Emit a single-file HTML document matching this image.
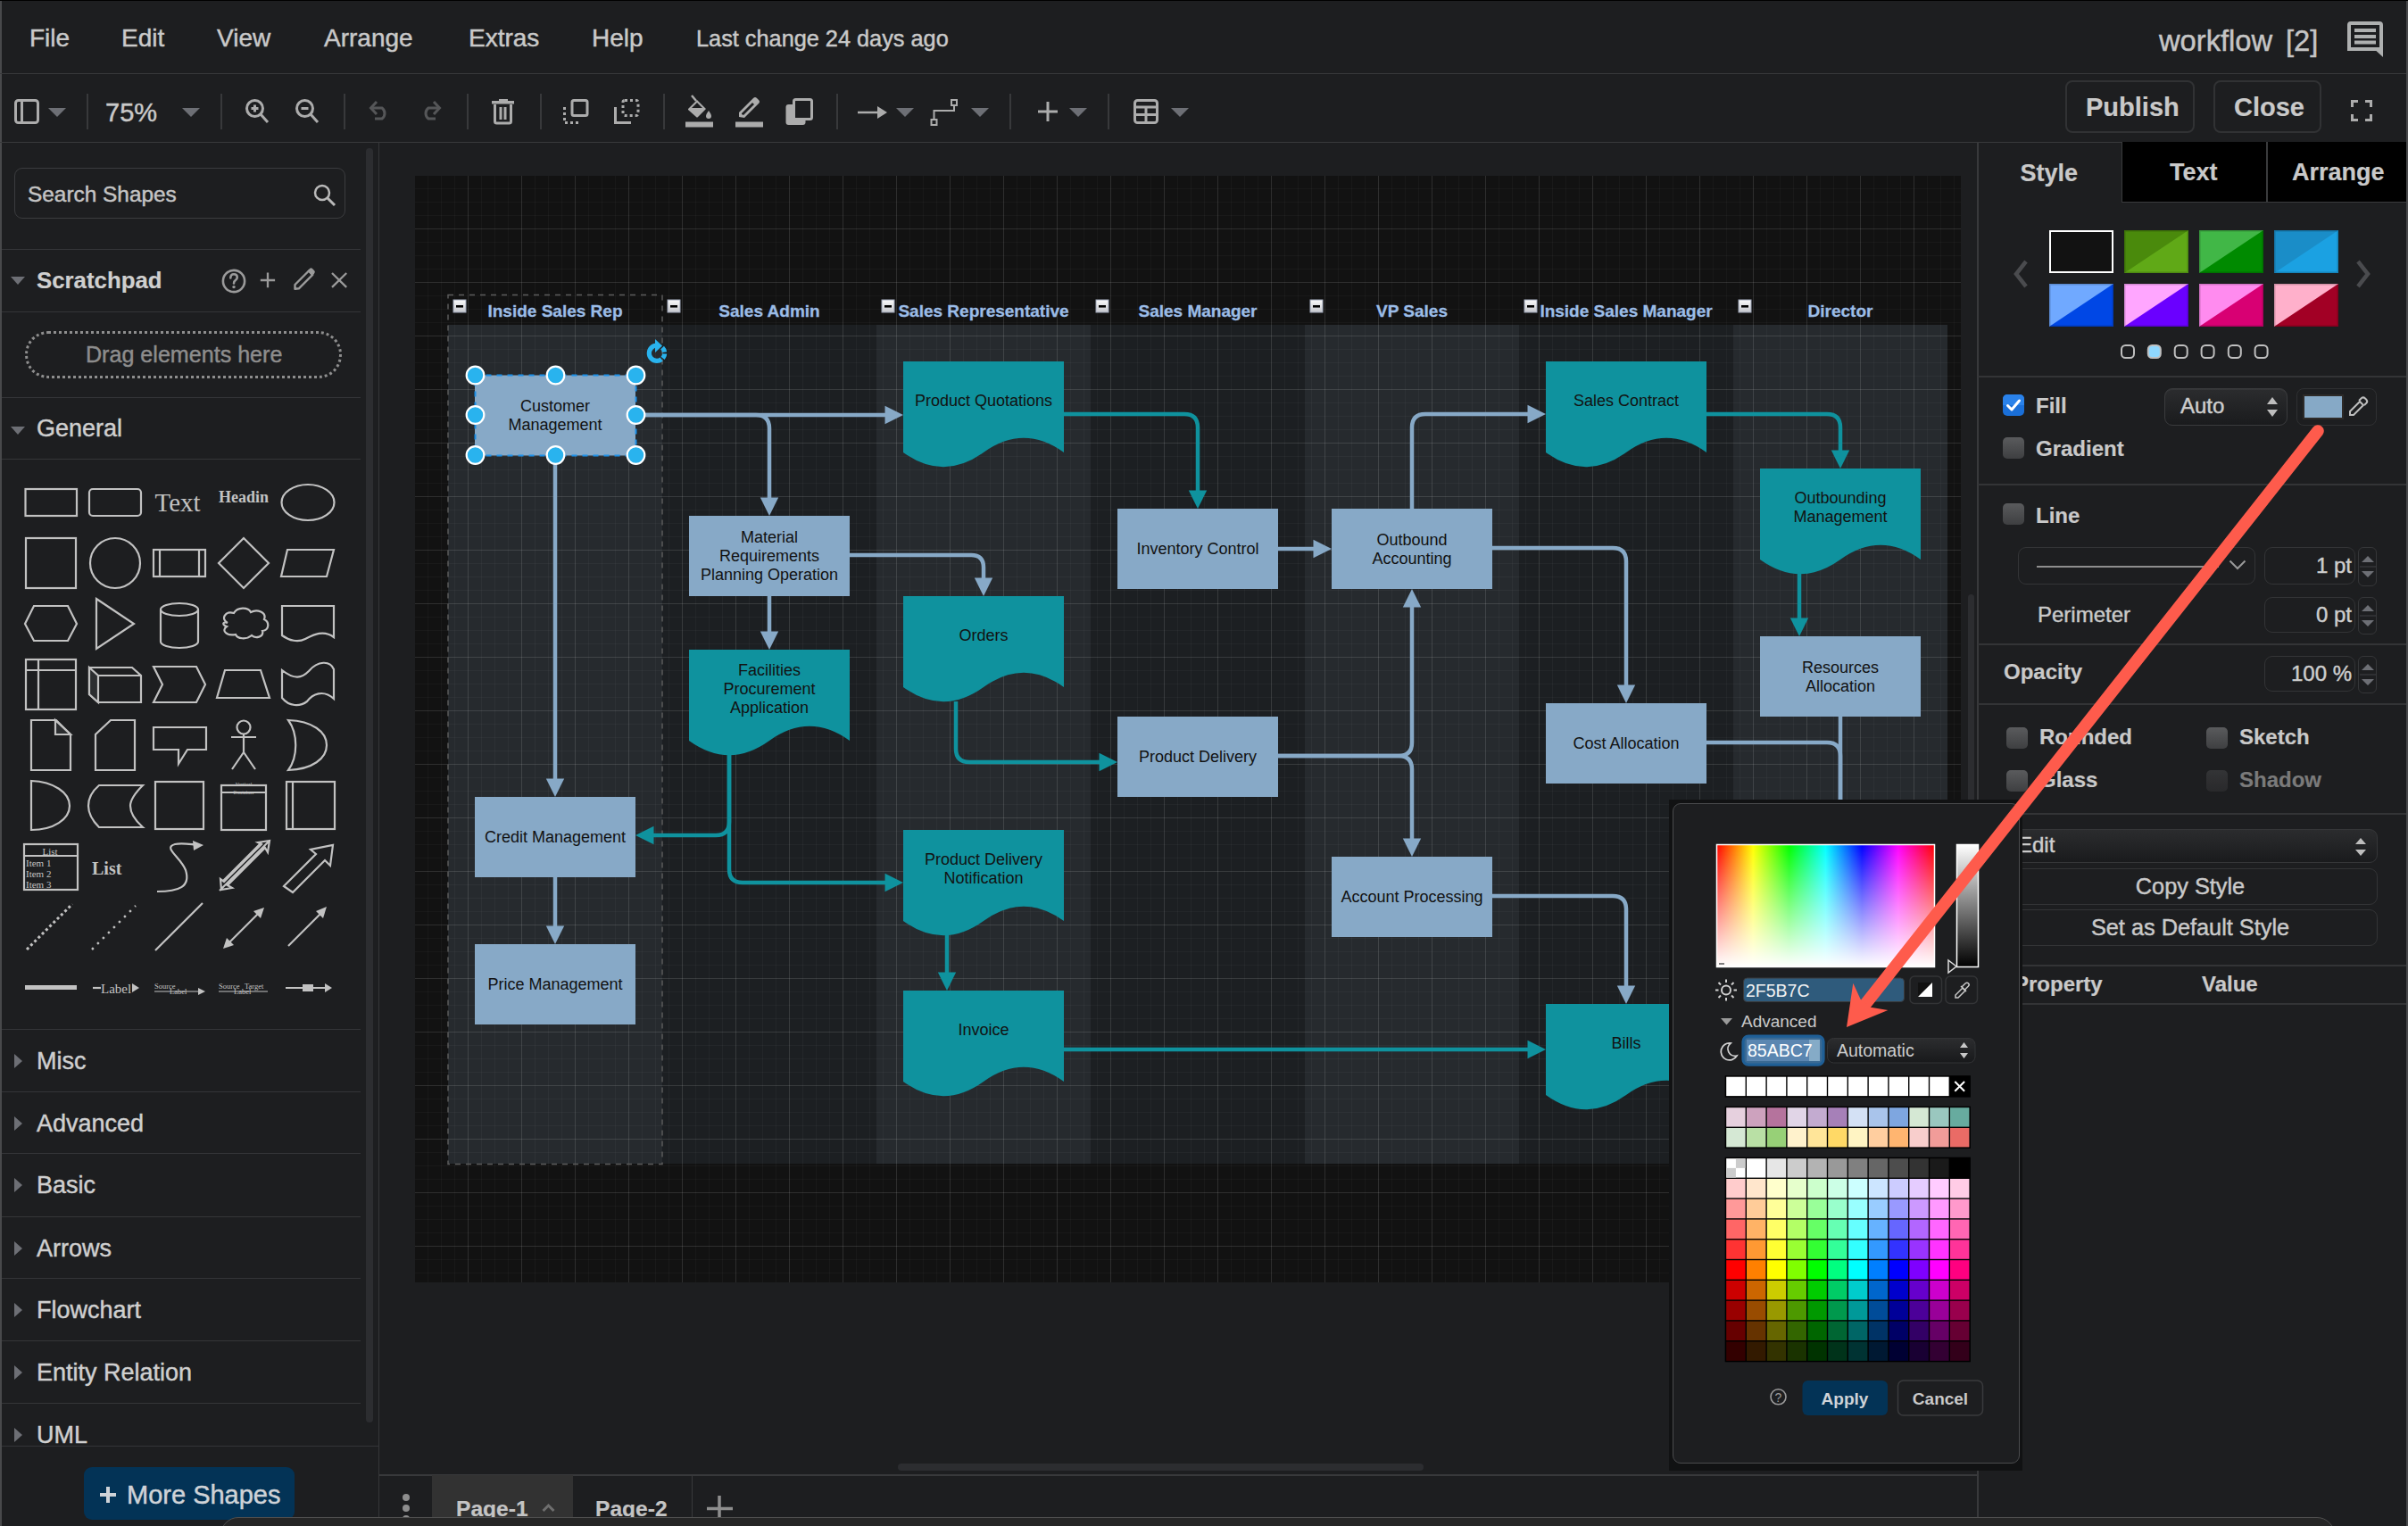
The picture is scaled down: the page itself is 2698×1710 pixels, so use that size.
<!DOCTYPE html>
<html><head><meta charset="utf-8"><title>draw.io</title>
<style>
html,body{margin:0;padding:0;}
body{width:2698px;height:1710px;overflow:hidden;position:relative;background:#1d1e20;font-family:"Liberation Sans", sans-serif;color:#c8c8c8;}
.a{position:absolute;}
.t{position:absolute;white-space:nowrap;line-height:1;-webkit-text-stroke:0.45px currentColor;}
.t.b{-webkit-text-stroke:0.2px currentColor;}
.hl{position:absolute;height:1px;background:#353638;}
.vl{position:absolute;width:1px;background:#353638;}
svg{position:absolute;overflow:visible;}
</style></head><body>

<div class="a" style="left:465px;top:197px;width:1732px;height:1240px;background:#121212"></div>
<svg style="left:0;top:0" width="2698" height="1710"><rect x="502" y="364" width="240" height="940" fill="#262a2e"/><rect x="742" y="364" width="240" height="940" fill="#1c1f22"/><rect x="982" y="364" width="240" height="940" fill="#262a2e"/><rect x="1222" y="364" width="240" height="940" fill="#1c1f22"/><rect x="1462" y="364" width="240" height="940" fill="#262a2e"/><rect x="1702" y="364" width="240" height="940" fill="#1c1f22"/><rect x="1942" y="364" width="240" height="940" fill="#262a2e"/></svg>
<div class="a" style="left:465px;top:197px;width:1732px;height:1240px;background-image:linear-gradient(to right, rgba(255,255,255,.09) 1px, transparent 1px),linear-gradient(to bottom, rgba(255,255,255,.09) 1px, transparent 1px),linear-gradient(to right, rgba(255,255,255,.03) 1px, transparent 1px),linear-gradient(to bottom, rgba(255,255,255,.03) 1px, transparent 1px);background-size:60px 60px,60px 60px,15px 15px,15px 15px;background-position:-1px -1px"></div>
<svg style="left:0;top:0" width="2698" height="1710"><g font-family="Liberation Sans, sans-serif"><rect x="502" y="330.5" width="240" height="974" fill="none" stroke="#5b5b5b" stroke-width="1.5" stroke-dasharray="6 6"/><text x="622" y="354.5" font-size="19" font-weight="bold" text-anchor="middle" fill="#9bbce6" stroke="#9bbce6" stroke-width="0.3">Inside Sales Rep</text><text x="862" y="354.5" font-size="19" font-weight="bold" text-anchor="middle" fill="#9bbce6" stroke="#9bbce6" stroke-width="0.3">Sales Admin</text><text x="1102" y="354.5" font-size="19" font-weight="bold" text-anchor="middle" fill="#9bbce6" stroke="#9bbce6" stroke-width="0.3">Sales Representative</text><text x="1342" y="354.5" font-size="19" font-weight="bold" text-anchor="middle" fill="#9bbce6" stroke="#9bbce6" stroke-width="0.3">Sales Manager</text><text x="1582" y="354.5" font-size="19" font-weight="bold" text-anchor="middle" fill="#9bbce6" stroke="#9bbce6" stroke-width="0.3">VP Sales</text><text x="1822" y="354.5" font-size="19" font-weight="bold" text-anchor="middle" fill="#9bbce6" stroke="#9bbce6" stroke-width="0.3">Inside Sales Manager</text><text x="2062" y="354.5" font-size="19" font-weight="bold" text-anchor="middle" fill="#9bbce6" stroke="#9bbce6" stroke-width="0.3">Director</text><defs><linearGradient id="cg" x1="0" y1="0" x2="0" y2="1"><stop offset="0" stop-color="#fbfbfb"/><stop offset="1" stop-color="#c4c6cc"/></linearGradient></defs><rect x="508" y="336" width="14" height="14" fill="url(#cg)" stroke="#9ea6b8" stroke-width="1"/><rect x="511" y="342" width="8" height="2.6" fill="#000"/><rect x="748" y="336" width="14" height="14" fill="url(#cg)" stroke="#9ea6b8" stroke-width="1"/><rect x="751" y="342" width="8" height="2.6" fill="#000"/><rect x="988" y="336" width="14" height="14" fill="url(#cg)" stroke="#9ea6b8" stroke-width="1"/><rect x="991" y="342" width="8" height="2.6" fill="#000"/><rect x="1228" y="336" width="14" height="14" fill="url(#cg)" stroke="#9ea6b8" stroke-width="1"/><rect x="1231" y="342" width="8" height="2.6" fill="#000"/><rect x="1468" y="336" width="14" height="14" fill="url(#cg)" stroke="#9ea6b8" stroke-width="1"/><rect x="1471" y="342" width="8" height="2.6" fill="#000"/><rect x="1708" y="336" width="14" height="14" fill="url(#cg)" stroke="#9ea6b8" stroke-width="1"/><rect x="1711" y="342" width="8" height="2.6" fill="#000"/><rect x="1948" y="336" width="14" height="14" fill="url(#cg)" stroke="#9ea6b8" stroke-width="1"/><rect x="1951" y="342" width="8" height="2.6" fill="#000"/><path d="M712.0 465.0 L993.5 465.0" fill="none" stroke="#87a9c7" stroke-width="4.5"/><path d="M1012.0 465.0 L991.5 475.2 L991.5 454.8 Z" fill="#87a9c7"/><path d="M712.0 465.0 L847.0 465.0 Q862.0 465.0 862.0 480.0 L862.0 559.5" fill="none" stroke="#87a9c7" stroke-width="4.5"/><path d="M862.0 578.0 L851.8 557.5 L872.2 557.5 Z" fill="#87a9c7"/><path d="M622.0 510.0 L622.0 874.5" fill="none" stroke="#87a9c7" stroke-width="4.5"/><path d="M622.0 893.0 L611.8 872.5 L632.2 872.5 Z" fill="#87a9c7"/><path d="M622.0 983.0 L622.0 1039.5" fill="none" stroke="#87a9c7" stroke-width="4.5"/><path d="M622.0 1058.0 L611.8 1037.5 L632.2 1037.5 Z" fill="#87a9c7"/><path d="M862.0 668.0 L862.0 709.5" fill="none" stroke="#87a9c7" stroke-width="4.5"/><path d="M862.0 728.0 L851.8 707.5 L872.2 707.5 Z" fill="#87a9c7"/><path d="M952.0 622.0 L1088.2 622.0 Q1102.0 622.0 1102.0 635.8 L1102.0 649.5" fill="none" stroke="#87a9c7" stroke-width="4.5"/><path d="M1102.0 668.0 L1091.8 647.5 L1112.2 647.5 Z" fill="#87a9c7"/><path d="M1432.0 615.0 L1473.5 615.0" fill="none" stroke="#87a9c7" stroke-width="4.5"/><path d="M1492.0 615.0 L1471.5 625.2 L1471.5 604.8 Z" fill="#87a9c7"/><path d="M1582.0 570.0 L1582.0 479.0 Q1582.0 464.0 1597.0 464.0 L1713.5 464.0" fill="none" stroke="#87a9c7" stroke-width="4.5"/><path d="M1732.0 464.0 L1711.5 474.2 L1711.5 453.8 Z" fill="#87a9c7"/><path d="M1672.0 614.0 L1807.0 614.0 Q1822.0 614.0 1822.0 629.0 L1822.0 769.5" fill="none" stroke="#87a9c7" stroke-width="4.5"/><path d="M1822.0 788.0 L1811.8 767.5 L1832.2 767.5 Z" fill="#87a9c7"/><path d="M1432.0 847.0 L1567.0 847.0 Q1582.0 847.0 1582.0 832.0 L1582.0 678.5" fill="none" stroke="#87a9c7" stroke-width="4.5"/><path d="M1582.0 660.0 L1592.2 680.5 L1571.8 680.5 Z" fill="#87a9c7"/><path d="M1432.0 847.0 L1567.0 847.0 Q1582.0 847.0 1582.0 862.0 L1582.0 941.5" fill="none" stroke="#87a9c7" stroke-width="4.5"/><path d="M1582.0 960.0 L1571.8 939.5 L1592.2 939.5 Z" fill="#87a9c7"/><path d="M1672.0 1004.0 L1807.0 1004.0 Q1822.0 1004.0 1822.0 1019.0 L1822.0 1106.5" fill="none" stroke="#87a9c7" stroke-width="4.5"/><path d="M1822.0 1125.0 L1811.8 1104.5 L1832.2 1104.5 Z" fill="#87a9c7"/><path d="M1912.0 832.0 L2047.0 832.0 Q2062.0 832.0 2062.0 847.0 L2062.0 1000.0" fill="none" stroke="#87a9c7" stroke-width="4.5"/><path d="M2062.0 803.0 L2062.0 1000.0" fill="none" stroke="#87a9c7" stroke-width="4.5"/><path d="M1192.0 464.0 L1327.0 464.0 Q1342.0 464.0 1342.0 479.0 L1342.0 551.5" fill="none" stroke="#0f929e" stroke-width="4.5"/><path d="M1342.0 570.0 L1331.8 549.5 L1352.2 549.5 Z" fill="#0f929e"/><path d="M1071.0 786.0 L1071.0 839.0 Q1071.0 854.0 1086.0 854.0 L1233.5 854.0" fill="none" stroke="#0f929e" stroke-width="4.5"/><path d="M1252.0 854.0 L1231.5 864.2 L1231.5 843.8 Z" fill="#0f929e"/><path d="M817.0 846.0 L817.0 921.0 Q817.0 936.0 802.0 936.0 L730.5 936.0" fill="none" stroke="#0f929e" stroke-width="4.5"/><path d="M712.0 936.0 L732.5 925.8 L732.5 946.2 Z" fill="#0f929e"/><path d="M817.0 846.0 L817.0 974.0 Q817.0 989.0 832.0 989.0 L993.5 989.0" fill="none" stroke="#0f929e" stroke-width="4.5"/><path d="M1012.0 989.0 L991.5 999.2 L991.5 978.8 Z" fill="#0f929e"/><path d="M1061.0 1047.0 L1061.0 1091.5" fill="none" stroke="#0f929e" stroke-width="4.5"/><path d="M1061.0 1110.0 L1050.8 1089.5 L1071.2 1089.5 Z" fill="#0f929e"/><path d="M1192.0 1176.0 L1713.5 1176.0" fill="none" stroke="#0f929e" stroke-width="4.5"/><path d="M1732.0 1176.0 L1711.5 1186.2 L1711.5 1165.8 Z" fill="#0f929e"/><path d="M1912.0 464.0 L2047.0 464.0 Q2062.0 464.0 2062.0 479.0 L2062.0 506.5" fill="none" stroke="#0f929e" stroke-width="4.5"/><path d="M2062.0 525.0 L2051.8 504.5 L2072.2 504.5 Z" fill="#0f929e"/><path d="M2016.0 643.0 L2016.0 694.5" fill="none" stroke="#0f929e" stroke-width="4.5"/><path d="M2016.0 713.0 L2005.8 692.5 L2026.2 692.5 Z" fill="#0f929e"/><rect x="532" y="420.5" width="180" height="90" fill="#87a9c7"/><text x="622" y="460.9" font-size="18" text-anchor="middle" fill="#121212">Customer</text><text x="622" y="482.1" font-size="18" text-anchor="middle" fill="#121212">Management</text><rect x="772" y="578" width="180" height="90" fill="#87a9c7"/><text x="862" y="607.9" font-size="18" text-anchor="middle" fill="#121212">Material</text><text x="862" y="629.0" font-size="18" text-anchor="middle" fill="#121212">Requirements</text><text x="862" y="650.1" font-size="18" text-anchor="middle" fill="#121212">Planning Operation</text><rect x="1252" y="570" width="180" height="90" fill="#87a9c7"/><text x="1342" y="621.0" font-size="18" text-anchor="middle" fill="#121212">Inventory Control</text><rect x="1492" y="570" width="180" height="90" fill="#87a9c7"/><text x="1582" y="610.5" font-size="18" text-anchor="middle" fill="#121212">Outbound</text><text x="1582" y="631.5" font-size="18" text-anchor="middle" fill="#121212">Accounting</text><rect x="1972" y="713" width="180" height="90" fill="#87a9c7"/><text x="2062" y="753.5" font-size="18" text-anchor="middle" fill="#121212">Resources</text><text x="2062" y="774.5" font-size="18" text-anchor="middle" fill="#121212">Allocation</text><rect x="1732" y="788" width="180" height="90" fill="#87a9c7"/><text x="1822" y="839.0" font-size="18" text-anchor="middle" fill="#121212">Cost Allocation</text><rect x="1252" y="803" width="180" height="90" fill="#87a9c7"/><text x="1342" y="854.0" font-size="18" text-anchor="middle" fill="#121212">Product Delivery</text><rect x="532" y="893" width="180" height="90" fill="#87a9c7"/><text x="622" y="944.0" font-size="18" text-anchor="middle" fill="#121212">Credit Management</text><rect x="1492" y="960" width="180" height="90" fill="#87a9c7"/><text x="1582" y="1011.0" font-size="18" text-anchor="middle" fill="#121212">Account Processing</text><rect x="532" y="1058" width="180" height="90" fill="#87a9c7"/><text x="622" y="1109.0" font-size="18" text-anchor="middle" fill="#121212">Price Management</text><path d="M1012 405 H1192 V507.0 Q1147.0 474.6 1102.0 507.0 Q1057.0 539.4 1012 507.0 Z" fill="#0f929e"/><text x="1102" y="454.6" font-size="18" text-anchor="middle" fill="#121212">Product Quotations</text><path d="M1012 668 H1192 V770.0 Q1147.0 737.6 1102.0 770.0 Q1057.0 802.4 1012 770.0 Z" fill="#0f929e"/><text x="1102" y="717.6" font-size="18" text-anchor="middle" fill="#121212">Orders</text><path d="M772 728 H952 V830.0 Q907.0 797.6 862.0 830.0 Q817.0 862.4 772 830.0 Z" fill="#0f929e"/><text x="862" y="756.5" font-size="18" text-anchor="middle" fill="#121212">Facilities</text><text x="862" y="777.6" font-size="18" text-anchor="middle" fill="#121212">Procurement</text><text x="862" y="798.7" font-size="18" text-anchor="middle" fill="#121212">Application</text><path d="M1732 405 H1912 V507.0 Q1867.0 474.6 1822.0 507.0 Q1777.0 539.4 1732 507.0 Z" fill="#0f929e"/><text x="1822" y="454.6" font-size="18" text-anchor="middle" fill="#121212">Sales Contract</text><path d="M1972 525 H2152 V627.0 Q2107.0 594.6 2062.0 627.0 Q2017.0 659.4 1972 627.0 Z" fill="#0f929e"/><text x="2062" y="564.1" font-size="18" text-anchor="middle" fill="#121212">Outbounding</text><text x="2062" y="585.1" font-size="18" text-anchor="middle" fill="#121212">Management</text><path d="M1012 930 H1192 V1032.0 Q1147.0 999.6 1102.0 1032.0 Q1057.0 1064.4 1012 1032.0 Z" fill="#0f929e"/><text x="1102" y="969.1" font-size="18" text-anchor="middle" fill="#121212">Product Delivery</text><text x="1102" y="990.1" font-size="18" text-anchor="middle" fill="#121212">Notification</text><path d="M1012 1110 H1192 V1212.0 Q1147.0 1179.6 1102.0 1212.0 Q1057.0 1244.4 1012 1212.0 Z" fill="#0f929e"/><text x="1102" y="1159.6" font-size="18" text-anchor="middle" fill="#121212">Invoice</text><path d="M1732 1125 H1912 V1227.0 Q1867.0 1194.6 1822.0 1227.0 Q1777.0 1259.4 1732 1227.0 Z" fill="#0f929e"/><text x="1822" y="1174.6" font-size="18" text-anchor="middle" fill="#121212">Bills</text><rect x="532.5" y="420.5" width="180" height="90" fill="none" stroke="#1b8fe8" stroke-width="2" stroke-dasharray="6 6"/><circle cx="532.5" cy="420.5" r="9.8" fill="#29b3ee" stroke="#fff" stroke-width="2.2"/><circle cx="622.5" cy="420.5" r="9.8" fill="#29b3ee" stroke="#fff" stroke-width="2.2"/><circle cx="712.5" cy="420.5" r="9.8" fill="#29b3ee" stroke="#fff" stroke-width="2.2"/><circle cx="532.5" cy="465" r="9.8" fill="#29b3ee" stroke="#fff" stroke-width="2.2"/><circle cx="712.5" cy="465" r="9.8" fill="#29b3ee" stroke="#fff" stroke-width="2.2"/><circle cx="532.5" cy="510" r="9.8" fill="#29b3ee" stroke="#fff" stroke-width="2.2"/><circle cx="622.5" cy="510" r="9.8" fill="#29b3ee" stroke="#fff" stroke-width="2.2"/><circle cx="712.5" cy="510" r="9.8" fill="#29b3ee" stroke="#fff" stroke-width="2.2"/><path d="M736 387 A8.7 8.7 0 0 0 736 404.4" fill="none" stroke="#29b3ee" stroke-width="5.2"/><path d="M736 404.4 A8.7 8.7 0 0 0 741.5 389" fill="none" stroke="#29b3ee" stroke-width="5.2" stroke-dasharray="5.5 1.8"/><path d="M734 380 L742 387.5 L734 395 Z" fill="#29b3ee"/></g></svg>
<div class="a" style="left:2205px;top:666px;width:7px;height:700px;background:#2c2d30;border-radius:4px"></div>
<div class="a" style="left:1006px;top:1640px;width:589px;height:8px;background:#2c2d30;border-radius:4px"></div>
<div class="hl" style="left:425px;top:1652px;width:1791px;height:2px;background:#38393b"></div>
<div class="a" style="left:484px;top:1653px;width:158px;height:47px;background:#323232"></div>
<div class="a" style="left:451px;top:1674.2px;width:8px;height:8px;border-radius:4px;background:#8e8e8e"></div>
<div class="a" style="left:451px;top:1685.9px;width:8px;height:8px;border-radius:4px;background:#8e8e8e"></div>
<div class="a" style="left:451px;top:1697.6px;width:8px;height:8px;border-radius:4px;background:#8e8e8e"></div>
<div class="t b" style="left:511px;top:1679.2px;font-size:24.6px;color:#c4c4c4;font-weight:bold;">Page-1</div>
<svg style="left:607px;top:1684px" width="15" height="11"><path d="M1.5 9 L7.5 3 L13.5 9" fill="none" stroke="#6e6e6e" stroke-width="3"/></svg>
<div class="t b" style="left:667px;top:1679.2px;font-size:24.6px;color:#c4c4c4;font-weight:bold;">Page-2</div>
<div class="vl" style="left:775px;top:1653px;height:47px;background:#38393b"></div>
<svg style="left:792px;top:1676px" width="29" height="29"><path d="M14 0 V29 M0 14.5 H29" stroke="#8e8e8e" stroke-width="3.5"/></svg>
<div class="a" style="left:16px;top:188px;width:369px;height:55px;border:1.5px solid #3b3c3f;border-radius:9px"></div>
<div class="t" style="left:31px;top:206.0px;font-size:24.4px;color:#c4c4c4;font-weight:normal;">Search Shapes</div>
<svg style="left:351px;top:206px" width="26" height="26"><circle cx="10" cy="10" r="8" fill="none" stroke="#b9b9b9" stroke-width="2.5"/><path d="M15.5 15.5 L24 24" stroke="#b9b9b9" stroke-width="3"/></svg>
<div class="hl" style="left:2px;top:279px;width:402px;background:#343538"></div>
<div class="hl" style="left:2px;top:349px;width:402px;background:#343538"></div>
<div class="hl" style="left:2px;top:445px;width:402px;background:#343538"></div>
<div class="hl" style="left:2px;top:514px;width:402px;background:#343538"></div>
<svg style="left:12px;top:310px" width="16" height="9"><path d="M0 0 H16 L8 9 Z" fill="#6d6f75"/></svg>
<div class="t b" style="left:41px;top:301.6px;font-size:25.8px;color:#cfcfcf;font-weight:bold;">Scratchpad</div>
<svg style="left:0;top:0" width="420" height="400"><circle cx="262" cy="315" r="12.1" fill="none" stroke="#9a9a9a" stroke-width="2.6"/><path d="M258.3 311.5 Q258.3 307.2 262 307.2 Q265.8 307.2 265.8 310.8 Q265.8 313 263.5 314.4 Q262 315.4 262 317.5" fill="none" stroke="#9a9a9a" stroke-width="2.6" stroke-linecap="round"/><circle cx="262" cy="321.6" r="1.7" fill="#9a9a9a"/><path d="M300 305.6 V322.2 M291.8 314 H308.1" stroke="#9a9a9a" stroke-width="2.3"/><path d="M330.5 323.8 L330.5 319 L346 303.5 L350.3 307.8 L334.8 323.3 Z" fill="none" stroke="#9a9a9a" stroke-width="2.4" stroke-linejoin="round"/><path d="M344.5 303.5 L347 301 Q348.5 299.6 350 301 L352.2 303.2 Q353.6 304.7 352.2 306.2 L349.5 309 Z" fill="#9a9a9a"/><path d="M372 306 L388.2 321.9 M388.2 306 L372 321.9" stroke="#9a9a9a" stroke-width="2.3"/></svg>
<div class="a" style="left:28px;top:371px;width:349px;height:47px;border:3px dotted #8e8e8e;border-radius:26px"></div>
<div class="t" style="left:96px;top:384.8px;font-size:25.1px;color:#8d8d8d;font-weight:normal;">Drag elements here</div>
<svg style="left:12px;top:478px" width="16" height="9"><path d="M0 0 H16 L8 9 Z" fill="#6d6f75"/></svg>
<div class="t" style="left:41px;top:466.8px;font-size:27px;color:#cfcfcf;font-weight:normal;">General</div>
<svg style="left:0;top:0" width="420" height="1200"><rect x="28.5" y="548" width="57.5" height="30" fill="none" stroke="#c2c2c2" stroke-width="2.2"/><rect x="100" y="548" width="58" height="30" rx="4" fill="none" stroke="#c2c2c2" stroke-width="2.2"/><text x="199" y="573" font-family="Liberation Serif" font-size="29" fill="#c2c2c2" text-anchor="middle">Text</text><text x="245" y="563" font-family="Liberation Serif" font-size="18" font-weight="bold" fill="#c2c2c2">Headin</text><ellipse cx="345" cy="563" rx="29.5" ry="20" fill="none" stroke="#c2c2c2" stroke-width="2.2"/><rect x="29" y="603" width="56" height="56" fill="none" stroke="#c2c2c2" stroke-width="2.2"/><circle cx="129" cy="631" r="28" fill="none" stroke="#c2c2c2" stroke-width="2.2"/><rect x="172" y="616" width="58" height="30" fill="none" stroke="#c2c2c2" stroke-width="2.2"/><path d="M179 616 V646 M223 616 V646" fill="none" stroke="#c2c2c2" stroke-width="2.2"/><path d="M273 603 L301 631 L273 659 L245 631 Z" fill="none" stroke="#c2c2c2" stroke-width="2.2"/><path d="M322 616 H374 L366 646 H315 Z" fill="none" stroke="#c2c2c2" stroke-width="2.2"/><path d="M28 699 L38 679 H76 L86 699 L76 718 H38 Z" fill="none" stroke="#c2c2c2" stroke-width="2.2"/><path d="M108 671 L150 699 L108 727 Z" fill="none" stroke="#c2c2c2" stroke-width="2.2"/><path d="M180 683 V719 A21 7 0 0 0 222 719 V683 A21 7 0 0 0 180 683 A21 7 0 0 0 222 683" fill="none" stroke="#c2c2c2" stroke-width="2.2"/><path d="M255 698 C247 694 252 684 262 687 C266 680 278 680 281 686 C288 682 299 686 296 694 C302 697 302 706 294 707 C296 714 286 716 282 712 C276 717 266 716 264 711 C255 713 247 707 254 702 C248 700 250 696 255 698 Z" fill="none" stroke="#c2c2c2" stroke-width="2.2"/><path d="M316 679 H374 V714 C362 705 350 712 342 716 C334 720 324 718 316 712 Z" fill="none" stroke="#c2c2c2" stroke-width="2.2"/><rect x="29" y="739" width="56" height="56" fill="none" stroke="#c2c2c2" stroke-width="2.2"/><path d="M29 751 H85 M43 739 V795" fill="none" stroke="#c2c2c2" stroke-width="2.2"/><path d="M100 748 H148 L158 757 V787 H110 L100 778 Z" fill="none" stroke="#c2c2c2" stroke-width="2.2"/><path d="M100 748 L110 757 V787 L100 778 Z" fill="#2c2e30" stroke="#c2c2c2" stroke-width="2.2"/><path d="M110 757 H158" fill="none" stroke="#c2c2c2" stroke-width="2.2"/><path d="M172 747 H220 L230 767 L220 787 H172 L182 767 Z" fill="none" stroke="#c2c2c2" stroke-width="2.2"/><path d="M252 751 H292 L302 782 H243 Z" fill="none" stroke="#c2c2c2" stroke-width="2.2"/><path d="M316 751 C330 762 338 760 346 752 C356 740 370 740 374 750 V783 C362 772 350 778 344 786 C336 792 324 792 316 782 Z" fill="none" stroke="#c2c2c2" stroke-width="2.2"/><path d="M35 807 H63 L79 823 V863 H35 Z" fill="none" stroke="#c2c2c2" stroke-width="2.2"/><path d="M62 807 V823 H79 Z" fill="#2c2e30" stroke="#c2c2c2" stroke-width="2.2"/><path d="M124 807 H151 V863 H107 V823 Z" fill="none" stroke="#c2c2c2" stroke-width="2.2"/><path d="M172 815 H231 V840 H210 L200 856 V840 H172 Z" fill="none" stroke="#c2c2c2" stroke-width="2.2"/><circle cx="273" cy="815" r="7.5" fill="none" stroke="#c2c2c2" stroke-width="2.2"/><path d="M259 826 H287 M273 822 V843 L260 862 M273 843 L286 862" fill="none" stroke="#c2c2c2" stroke-width="2.2"/><path d="M323 807 C350 808 366 820 366 835 C366 850 350 862 323 863 C334 848 334 822 323 807 Z" fill="none" stroke="#c2c2c2" stroke-width="2.2"/><path d="M35 875 C60 876 78 888 78 903 C78 918 60 930 35 930 Z" fill="none" stroke="#c2c2c2" stroke-width="2.2"/><path d="M111 880 H160 C150 890 146 898 146 903 C146 910 150 918 160 927 H111 C104 920 99 912 99 903 C99 894 104 886 111 880 Z" fill="none" stroke="#c2c2c2" stroke-width="2.2"/><rect x="174" y="876" width="54" height="53" fill="none" stroke="#c2c2c2" stroke-width="2.2"/><rect x="248" y="880" width="50" height="50" fill="none" stroke="#c2c2c2" stroke-width="2.2"/><path d="M248 888 H298" fill="none" stroke="#c2c2c2" stroke-width="2.2"/><text x="273" y="881" font-family="Liberation Serif" font-size="6" fill="#c2c2c2" text-anchor="middle">Vertical</text><text x="273" y="890" font-family="Liberation Serif" font-size="6" fill="#c2c2c2" text-anchor="middle">Container</text><rect x="321" y="876" width="54" height="53" fill="none" stroke="#c2c2c2" stroke-width="2.2"/><path d="M328 876 V929" fill="none" stroke="#c2c2c2" stroke-width="2.2"/><rect x="27" y="946" width="60" height="51" fill="none" stroke="#c2c2c2" stroke-width="2.2"/><path d="M27 959 H87" fill="none" stroke="#c2c2c2" stroke-width="2.2"/><text x="56" y="958" font-family="Liberation Serif" font-size="11" fill="#c2c2c2" text-anchor="middle">List</text><text x="29" y="971" font-family="Liberation Serif" font-size="11" fill="#c2c2c2">Item 1</text><text x="29" y="983" font-family="Liberation Serif" font-size="11" fill="#c2c2c2">Item 2</text><text x="29" y="995" font-family="Liberation Serif" font-size="11" fill="#c2c2c2">Item 3</text><text x="103" y="980" font-family="Liberation Serif" font-size="20" font-weight="bold" fill="#c2c2c2">List</text><path d="M176 999 C200 999 214 994 208 975 C202 960 182 950 196 946 C204 944 212 946 222 947" fill="none" stroke="#c2c2c2" stroke-width="2.2"/><path d="M216 942 L228 947 L217 953 Z" fill="#c2c2c2"/><path d="M246 998 L301 943 M250 987 L293 944 M248 997 L260 995 L255 992 L297 950 L300 955 L302 942 L289 944 L293 946 L251 988 L247 985 Z" fill="none" stroke="#c2c2c2" stroke-width="2.2"/><path d="M318 993 L354 957 L348 952 L373 947 L370 970 L364 964 L328 1000 Z" fill="none" stroke="#c2c2c2" stroke-width="2.2"/><path d="M30 1064 L81 1013" stroke="#c2c2c2" stroke-width="3" stroke-dasharray="3 3"/><path d="M103 1064 L152 1015" stroke="#c2c2c2" stroke-width="2.5" stroke-dasharray="2.5 6"/><path d="M174 1065 L227 1012" fill="none" stroke="#c2c2c2" stroke-width="2.2"/><path d="M254 1059 L292 1021" fill="none" stroke="#c2c2c2" stroke-width="2.2"/><path d="M250 1063 L254 1051 L262 1059 Z M296 1017 L292 1029 L284 1021 Z" fill="#c2c2c2"/><path d="M323 1060 L362 1021" fill="none" stroke="#c2c2c2" stroke-width="2.2"/><path d="M366 1016 L362 1029 L354 1021 Z" fill="#c2c2c2"/><rect x="28" y="1104" width="58" height="5" fill="#c2c2c2"/><path d="M104 1107 H113" fill="none" stroke="#c2c2c2" stroke-width="2.2"/><text x="113" y="1113" font-family="Liberation Serif" font-size="15" fill="#c2c2c2">Label</text><path d="M148 1102 L156 1107 L148 1112 Z" fill="#c2c2c2"/><text x="173" y="1108" font-family="Liberation Serif" font-size="8.5" fill="#c2c2c2">Source</text><text x="190" y="1114" font-family="Liberation Serif" font-size="8.5" fill="#c2c2c2">Label</text><path d="M173 1111 H225" stroke="#c2c2c2" stroke-width="1.2"/><path d="M222 1107 L230 1111 L222 1115 Z" fill="#c2c2c2"/><text x="245" y="1108" font-family="Liberation Serif" font-size="8.5" fill="#c2c2c2">Source</text><text x="274" y="1108" font-family="Liberation Serif" font-size="8.5" fill="#c2c2c2">Target</text><text x="262" y="1114" font-family="Liberation Serif" font-size="8.5" fill="#c2c2c2">Label</text><path d="M245 1111 H300" stroke="#c2c2c2" stroke-width="1.2"/><path d="M320 1107 H368" fill="none" stroke="#c2c2c2" stroke-width="2.2"/><rect x="339" y="1103" width="12" height="8" fill="#c2c2c2"/><path d="M364 1102 L372 1107 L364 1112 Z" fill="#c2c2c2"/></svg>
<div class="hl" style="left:2px;top:1153px;width:402px;background:#343538"></div>
<svg style="left:16px;top:1181px" width="9" height="16"><path d="M0 0 L9 8 L0 16 Z" fill="#6d6f75"/></svg>
<div class="t" style="left:41px;top:1175.7px;font-size:27px;color:#cfcfcf;font-weight:normal;">Misc</div>
<div class="hl" style="left:2px;top:1223px;width:402px;background:#343538"></div>
<svg style="left:16px;top:1251px" width="9" height="16"><path d="M0 0 L9 8 L0 16 Z" fill="#6d6f75"/></svg>
<div class="t" style="left:41px;top:1245.7px;font-size:27px;color:#cfcfcf;font-weight:normal;">Advanced</div>
<div class="hl" style="left:2px;top:1292px;width:402px;background:#343538"></div>
<svg style="left:16px;top:1320px" width="9" height="16"><path d="M0 0 L9 8 L0 16 Z" fill="#6d6f75"/></svg>
<div class="t" style="left:41px;top:1314.7px;font-size:27px;color:#cfcfcf;font-weight:normal;">Basic</div>
<div class="hl" style="left:2px;top:1363px;width:402px;background:#343538"></div>
<svg style="left:16px;top:1391px" width="9" height="16"><path d="M0 0 L9 8 L0 16 Z" fill="#6d6f75"/></svg>
<div class="t" style="left:41px;top:1385.7px;font-size:27px;color:#cfcfcf;font-weight:normal;">Arrows</div>
<div class="hl" style="left:2px;top:1432px;width:402px;background:#343538"></div>
<svg style="left:16px;top:1460px" width="9" height="16"><path d="M0 0 L9 8 L0 16 Z" fill="#6d6f75"/></svg>
<div class="t" style="left:41px;top:1454.7px;font-size:27px;color:#cfcfcf;font-weight:normal;">Flowchart</div>
<div class="hl" style="left:2px;top:1502px;width:402px;background:#343538"></div>
<svg style="left:16px;top:1530px" width="9" height="16"><path d="M0 0 L9 8 L0 16 Z" fill="#6d6f75"/></svg>
<div class="t" style="left:41px;top:1524.7px;font-size:27px;color:#cfcfcf;font-weight:normal;">Entity Relation</div>
<div class="hl" style="left:2px;top:1572px;width:402px;background:#343538"></div>
<svg style="left:16px;top:1600px" width="9" height="16"><path d="M0 0 L9 8 L0 16 Z" fill="#6d6f75"/></svg>
<div class="t" style="left:41px;top:1594.7px;font-size:27px;color:#cfcfcf;font-weight:normal;">UML</div>
<div class="a" style="left:2px;top:1621px;width:422px;height:90px;background:#1d1e20"></div>
<div class="hl" style="left:2px;top:1620px;width:422px;background:#343538"></div>
<div class="a" style="left:94px;top:1644px;width:236px;height:59px;background:#033356;border-radius:9px"></div>
<svg style="left:111px;top:1665px" width="20" height="20"><path d="M10 1 V19 M1 10 H19" stroke="#cfd3d8" stroke-width="4"/></svg>
<div class="t" style="left:142px;top:1660.9px;font-size:29px;color:#cfd3d8;font-weight:normal;">More Shapes</div>
<div class="a" style="left:410px;top:166px;width:8px;height:1428px;background:#2c2d30;border-radius:4px"></div>
<div class="vl" style="left:424px;top:159px;height:1551px;background:#353638"></div>
<div class="a" style="left:0;top:0;width:2px;height:1710px;background:#48494b"></div>
<div class="t" style="left:33px;top:28.6px;font-size:28px;color:#c9c9c9;font-weight:normal;">File</div>
<div class="t" style="left:136px;top:28.6px;font-size:28px;color:#c9c9c9;font-weight:normal;">Edit</div>
<div class="t" style="left:243px;top:28.6px;font-size:28px;color:#c9c9c9;font-weight:normal;">View</div>
<div class="t" style="left:363px;top:28.6px;font-size:28px;color:#c9c9c9;font-weight:normal;">Arrange</div>
<div class="t" style="left:525px;top:28.6px;font-size:28px;color:#c9c9c9;font-weight:normal;">Extras</div>
<div class="t" style="left:663px;top:28.6px;font-size:28px;color:#c9c9c9;font-weight:normal;">Help</div>
<div class="t" style="left:780px;top:30.6px;font-size:25.3px;color:#c9c9c9;font-weight:normal;">Last change 24 days ago</div>
<div class="t" style="left:2419px;top:30.1px;font-size:32.7px;color:#c5c5c5;font-weight:normal;">workflow</div>
<div class="t" style="left:2561px;top:30.1px;font-size:32.7px;color:#c5c5c5;font-weight:normal;">[2]</div>
<svg style="left:2628px;top:22px" width="46" height="46">
<path d="M6 4 H38 Q40 4 40 6 V33 H4 V6 Q4 4 6 4 Z" fill="none" stroke="#aeb0b0" stroke-width="4"/>
<path d="M30 31 L42 31 L42 42 Z" fill="#aeb0b0"/>
<rect x="10" y="10" width="24" height="4" fill="#aeb0b0"/><rect x="10" y="17" width="24" height="4" fill="#aeb0b0"/><rect x="10" y="23.5" width="24" height="4" fill="#aeb0b0"/>
</svg>
<div class="hl" style="left:0;top:82px;width:2698px;background:#38393b"></div>
<svg style="left:16px;top:111px" width="28" height="28"><rect x="1.5" y="1.5" width="25" height="25" rx="3" fill="none" stroke="#acacac" stroke-width="3"/><rect x="7" y="2" width="3" height="24" fill="#acacac"/></svg>
<svg style="left:54px;top:121px" width="20" height="10"><path d="M0 0 L20 0 L10.0 10 Z" fill="#6d6f75"/></svg>
<div class="vl" style="left:97px;top:105px;height:40px;width:2px;background:#38393b"></div>
<div class="vl" style="left:247px;top:105px;height:40px;width:2px;background:#38393b"></div>
<div class="vl" style="left:385px;top:105px;height:40px;width:2px;background:#38393b"></div>
<div class="vl" style="left:523px;top:105px;height:40px;width:2px;background:#38393b"></div>
<div class="vl" style="left:605px;top:105px;height:40px;width:2px;background:#38393b"></div>
<div class="vl" style="left:743px;top:105px;height:40px;width:2px;background:#38393b"></div>
<div class="vl" style="left:937px;top:105px;height:40px;width:2px;background:#38393b"></div>
<div class="vl" style="left:1131px;top:105px;height:40px;width:2px;background:#38393b"></div>
<div class="vl" style="left:1241px;top:105px;height:40px;width:2px;background:#38393b"></div>
<div class="t" style="left:118px;top:111.8px;font-size:29px;color:#c9c9c9;font-weight:normal;">75%</div>
<svg style="left:204px;top:121px" width="20" height="10"><path d="M0 0 L20 0 L10.0 10 Z" fill="#6d6f75"/></svg>
<svg style="left:274px;top:110px" width="28" height="29"><circle cx="11.5" cy="11.5" r="9" fill="none" stroke="#acacac" stroke-width="3"/><path d="M18 18 L26 27" stroke="#acacac" stroke-width="3"/><path d="M7.5 11.5 H15.5 M11.5 7.5 V15.5" stroke="#acacac" stroke-width="3"/></svg>
<svg style="left:330px;top:110px" width="28" height="29"><circle cx="11.5" cy="11.5" r="9" fill="none" stroke="#acacac" stroke-width="3"/><path d="M18 18 L26 27" stroke="#acacac" stroke-width="3"/><path d="M7.5 11.5 H15.5" stroke="#acacac" stroke-width="3"/></svg>
<svg style="left:413px;top:112px" width="26" height="24"><path d="M3 9 H15 A7.5 7.5 0 0 1 15 21 H7" fill="none" stroke="#555658" stroke-width="3"/><path d="M9 2 L2.5 9 L9 16" fill="none" stroke="#555658" stroke-width="3"/></svg>
<svg style="left:469px;top:112px" width="26" height="24"><path d="M23 9 H11 A7.5 7.5 0 0 0 11 21 H19" fill="none" stroke="#555658" stroke-width="3"/><path d="M17 2 L23.5 9 L17 16" fill="none" stroke="#555658" stroke-width="3"/></svg>
<svg style="left:551px;top:111px" width="26" height="28"><rect x="8" y="0" width="10" height="3" fill="#acacac"/><rect x="0" y="2" width="25" height="3.5" fill="#acacac"/><path d="M3.5 6 V25 Q3.5 27 5.5 27 H19.5 Q21.5 27 21.5 25 V6" fill="none" stroke="#acacac" stroke-width="3"/><rect x="8.5" y="9" width="3" height="14" fill="#acacac"/><rect x="13.5" y="9" width="3" height="14" fill="#acacac"/></svg>
<svg style="left:631px;top:111px" width="29" height="28"><rect x="10" y="1.5" width="17" height="17" rx="2" fill="none" stroke="#acacac" stroke-width="3"/><path d="M1.5 9 V26.5 H19" fill="none" stroke="#acacac" stroke-width="3" stroke-dasharray="3 3"/></svg>
<svg style="left:688px;top:111px" width="29" height="28"><rect x="10" y="1.5" width="17" height="17" rx="2" fill="none" stroke="#acacac" stroke-width="3" stroke-dasharray="3 3"/><path d="M1.5 9 V26.5 H19" fill="none" stroke="#acacac" stroke-width="3"/></svg>
<svg style="left:768px;top:106px" width="32" height="38"><path d="M7 1 L12 7" stroke="#acacac" stroke-width="2.5"/><path d="M3 16 L13 6 L23 16 L14 25 Q13 26 12 25 L3 17 Z" fill="#acacac"/><path d="M7 15 L13 9 L19 15 Z" fill="#1d1e20"/><path d="M26 18 Q23 22 23 24 A3 3 0 0 0 29 24 Q29 22 26 18 Z" fill="#acacac"/><rect x="0" y="30.5" width="31" height="6" fill="#acacac"/></svg>
<svg style="left:824px;top:106px" width="32" height="38"><path d="M4 25 L4 20 L20 4 Q22 2 24 4 L26 6 Q28 8 26 10 L10 26 Z" fill="#acacac"/><path d="M7 22 L7 21 L19 9 L21 11 L9 23 Z" fill="#1d1e20"/><rect x="0" y="30.5" width="31" height="6" fill="#acacac"/></svg>
<svg style="left:880px;top:110px" width="32" height="31"><rect x="0.5" y="7" width="22" height="23" rx="3" fill="#acacac"/><rect x="9.5" y="1.5" width="20" height="22" rx="2" fill="#1d1e20" stroke="#acacac" stroke-width="3"/></svg>
<svg style="left:961px;top:117px" width="34" height="18"><path d="M0 9 H24" stroke="#acacac" stroke-width="2.5"/><path d="M22 2 L33 9 L22 16 Z" fill="#acacac"/></svg>
<svg style="left:1004px;top:121px" width="20" height="10"><path d="M0 0 L20 0 L10.0 10 Z" fill="#6d6f75"/></svg>
<svg style="left:1043px;top:111px" width="30" height="30"><path d="M3.5 25 V13 H26 V5" fill="none" stroke="#acacac" stroke-width="2"/><rect x="23" y="1" width="6" height="6" fill="#1d1e20" stroke="#acacac" stroke-width="2"/><rect x="0.5" y="23" width="6" height="6" fill="#1d1e20" stroke="#acacac" stroke-width="2"/></svg>
<svg style="left:1088px;top:121px" width="20" height="10"><path d="M0 0 L20 0 L10.0 10 Z" fill="#6d6f75"/></svg>
<svg style="left:1163px;top:114px" width="22" height="22"><path d="M11 0 V22 M0 11 H22" stroke="#acacac" stroke-width="3"/></svg>
<svg style="left:1198px;top:121px" width="20" height="10"><path d="M0 0 L20 0 L10.0 10 Z" fill="#6d6f75"/></svg>
<svg style="left:1270px;top:111px" width="28" height="28"><rect x="1.5" y="1.5" width="25" height="25" rx="3" fill="none" stroke="#acacac" stroke-width="3"/><path d="M2 9 H26 M2 17.5 H26 M14 9 V26" stroke="#acacac" stroke-width="3"/></svg>
<svg style="left:1312px;top:121px" width="20" height="10"><path d="M0 0 L20 0 L10.0 10 Z" fill="#6d6f75"/></svg>
<div class="a" style="left:2314px;top:90px;width:145px;height:59px;border:2px solid #313234;border-radius:8px;box-sizing:border-box"></div>
<div class="t b" style="left:2337px;top:106.0px;font-size:29px;color:#c9c9c9;font-weight:bold;">Publish</div>
<div class="a" style="left:2480px;top:90px;width:121px;height:59px;border:2px solid #313234;border-radius:8px;box-sizing:border-box"></div>
<div class="t b" style="left:2503px;top:106.0px;font-size:29px;color:#c9c9c9;font-weight:bold;">Close</div>
<svg style="left:2634px;top:112px" width="24" height="24"><path d="M1.5 8 V1.5 H8 M16 1.5 H22.5 V8 M22.5 16 V22.5 H16 M8 22.5 H1.5 V16" fill="none" stroke="#acacac" stroke-width="3"/></svg>
<div class="hl" style="left:0;top:159px;width:2698px;background:#38393b"></div>
<div class="vl" style="left:2215px;top:159px;height:1551px;background:#38393b;width:1.5px"></div>
<div class="a" style="left:2377px;top:159px;width:320px;height:67px;background:#000;border-left:1.5px solid #3a3b3d;border-bottom:1.5px solid #3a3b3d;box-sizing:content-box"></div>
<div class="vl" style="left:2539px;top:159px;height:68px;background:#3a3b3d;width:1.5px"></div>
<div class="t b" style="left:2263.5px;top:181.4px;font-size:27px;color:#c9c9c9;font-weight:bold;">Style</div>
<div class="t b" style="left:2431px;top:179.5px;font-size:27px;color:#c9c9c9;font-weight:bold;">Text</div>
<div class="t b" style="left:2568px;top:179.5px;font-size:27px;color:#c9c9c9;font-weight:bold;">Arrange</div>
<svg style="left:0;top:0" width="2698" height="1710"><rect x="2297" y="259" width="70" height="46" fill="#121212" stroke="#fff" stroke-width="2"/><rect x="2380" y="258" width="72" height="48" fill="#60a917"/><path d="M2380 258 H2452 L2380 306 Z" fill="#4a8a0c"/><rect x="2380.75" y="258.75" width="70.5" height="46.5" fill="none" stroke="rgba(0,0,0,.18)" stroke-width="1.5"/><rect x="2464" y="258" width="72" height="48" fill="#008a00"/><path d="M2464 258 H2536 L2464 306 Z" fill="#41b747"/><rect x="2464.75" y="258.75" width="70.5" height="46.5" fill="none" stroke="rgba(0,0,0,.18)" stroke-width="1.5"/><rect x="2548" y="258" width="72" height="48" fill="#1ba1e2"/><path d="M2548 258 H2620 L2548 306 Z" fill="#1a8dc8"/><rect x="2548.75" y="258.75" width="70.5" height="46.5" fill="none" stroke="rgba(0,0,0,.18)" stroke-width="1.5"/><rect x="2296" y="318" width="72" height="48" fill="#0047e5"/><path d="M2296 318 H2368 L2296 366 Z" fill="#70a9ff"/><rect x="2296.75" y="318.75" width="70.5" height="46.5" fill="none" stroke="rgba(0,0,0,.18)" stroke-width="1.5"/><rect x="2380" y="318" width="72" height="48" fill="#6a00ff"/><path d="M2380 318 H2452 L2380 366 Z" fill="#ffa6ff"/><rect x="2380.75" y="318.75" width="70.5" height="46.5" fill="none" stroke="rgba(0,0,0,.18)" stroke-width="1.5"/><rect x="2464" y="318" width="72" height="48" fill="#d80073"/><path d="M2464 318 H2536 L2464 366 Z" fill="#ff8bef"/><rect x="2464.75" y="318.75" width="70.5" height="46.5" fill="none" stroke="rgba(0,0,0,.18)" stroke-width="1.5"/><rect x="2548" y="318" width="72" height="48" fill="#a20025"/><path d="M2548 318 H2620 L2548 366 Z" fill="#ffb0cb"/><rect x="2548.75" y="318.75" width="70.5" height="46.5" fill="none" stroke="rgba(0,0,0,.18)" stroke-width="1.5"/><path d="M2270 293 L2259 307 L2270 321" fill="none" stroke="#4a4b4e" stroke-width="4.5"/><path d="M2642 293 L2653 307 L2642 321" fill="none" stroke="#4a4b4e" stroke-width="4.5"/><rect x="2377" y="387" width="14" height="14" rx="4.5" fill="none" stroke="#bfbfbf" stroke-width="2"/><rect x="2406.8" y="387" width="14" height="14" rx="4.5" fill="#8fd8ff" stroke="#bfbfbf" stroke-width="2"/><rect x="2436.7" y="387" width="14" height="14" rx="4.5" fill="none" stroke="#bfbfbf" stroke-width="2"/><rect x="2466.6" y="387" width="14" height="14" rx="4.5" fill="none" stroke="#bfbfbf" stroke-width="2"/><rect x="2496.8" y="387" width="14" height="14" rx="4.5" fill="none" stroke="#bfbfbf" stroke-width="2"/><rect x="2526.6" y="387" width="14" height="14" rx="4.5" fill="none" stroke="#bfbfbf" stroke-width="2"/></svg>
<div class="hl" style="left:2216px;top:421px;width:481px;background:#333436;height:1.5px"></div>
<div class="hl" style="left:2216px;top:542px;width:481px;background:#333436;height:1.5px"></div>
<div class="hl" style="left:2216px;top:721px;width:481px;background:#333436;height:1.5px"></div>
<div class="hl" style="left:2216px;top:788px;width:481px;background:#333436;height:1.5px"></div>
<div class="hl" style="left:2216px;top:911px;width:481px;background:#333436;height:1.5px"></div>
<div class="hl" style="left:2216px;top:1081px;width:481px;background:#333436;height:1.5px"></div>
<div class="hl" style="left:2216px;top:1124px;width:481px;background:#333436;height:1.5px"></div>
<svg style="left:2244px;top:442px" width="24" height="24"><rect x="0" y="0" width="24" height="24" rx="5" fill="#1a6fd8"/><rect x="0" y="0" width="24" height="12" rx="5" fill="#2a82ea"/><rect x="0" y="6" width="24" height="6" fill="#2a82ea"/><path d="M5.5 12.5 L10 17 L18.5 7" fill="none" stroke="#fff" stroke-width="3" stroke-linecap="round" stroke-linejoin="round"/></svg>
<div class="t b" style="left:2281px;top:443.4px;font-size:24px;color:#c9c9c9;font-weight:bold;">Fill</div>
<div class="a" style="left:2425px;top:435px;width:138px;height:42px;border-radius:9px;background:linear-gradient(#2b2c2e,#1a1b1d);border:1px solid #3a3b3d;box-sizing:border-box;box-shadow:inset 0 1px 0 rgba(255,255,255,.05)"></div>
<div class="t" style="left:2443px;top:442.7px;font-size:24px;color:#cdcdcd;font-weight:normal;">Auto</div>
<svg style="left:2538px;top:443px" width="16" height="26"><path d="M2 10 L8 2 L14 10 Z M2 16 L8 24 L14 16 Z" fill="#bdbdbd"/></svg>
<div class="a" style="left:2573px;top:435px;width:90px;height:42px;border-radius:8px;border:1.5px solid #2f3032;box-sizing:border-box"></div>
<div class="a" style="left:2580px;top:442px;width:46px;height:28px;background:#86a9c6;border:2px solid #2d2a28;box-sizing:border-box"></div>
<svg style="left:2630px;top:444px" width="24" height="24"><path d="M3 21 L3 17 L14 6 L18 10 L7 21 Z" fill="none" stroke="#bdbdbd" stroke-width="2"/><path d="M13 5 L16 2 Q18 0.5 20 2.5 L21.5 4 Q23 6 21.5 7.5 L19 10" fill="none" stroke="#bdbdbd" stroke-width="2"/></svg>
<svg style="left:2244px;top:490px" width="24" height="24"><defs><linearGradient id="cb2244490" x1="0" y1="0" x2="0" y2="1"><stop offset="0" stop-color="#5a5b5d"/><stop offset="1" stop-color="#3e3f41"/></linearGradient></defs><rect x="0" y="0" width="24" height="24" rx="5" fill="url(#cb2244490)"/></svg>
<div class="t b" style="left:2281px;top:491.0px;font-size:24px;color:#c9c9c9;font-weight:bold;">Gradient</div>
<svg style="left:2244px;top:564px" width="24" height="24"><defs><linearGradient id="cb2244564" x1="0" y1="0" x2="0" y2="1"><stop offset="0" stop-color="#5a5b5d"/><stop offset="1" stop-color="#3e3f41"/></linearGradient></defs><rect x="0" y="0" width="24" height="24" rx="5" fill="url(#cb2244564)"/></svg>
<div class="t b" style="left:2281px;top:565.7px;font-size:24px;color:#c9c9c9;font-weight:bold;">Line</div>
<div class="a" style="left:2261px;top:613px;width:266px;height:42px;border-radius:9px;border:1.5px solid #333436;box-sizing:border-box"></div>
<div class="a" style="left:2282px;top:634px;width:204px;height:2px;background:#8e8e8e"></div>
<svg style="left:2497px;top:627px" width="20" height="12"><path d="M1.5 1.5 L10 10 L18.5 1.5" fill="none" stroke="#9a9a9a" stroke-width="2"/></svg>
<div class="a" style="left:2537px;top:613px;width:102px;height:42px;border-radius:9px;border:1.5px solid #333436;box-sizing:border-box"></div>
<div class="t" style="left:2537px;top:622.0px;width:98px;text-align:right;font-size:24px;color:#cdcdcd">1 pt</div>
<div class="a" style="left:2642px;top:613px;width:21px;height:44px;border:1.5px solid #353638;border-radius:6px;box-sizing:border-box"></div><svg style="left:2642px;top:613px" width="22" height="44"><path d="M4 17.0 L11 10.0 L18 17.0 Z M4 27.0 L11 34.0 L18 27.0 Z" fill="#6d6f75"/><path d="M2 22.0 H20" stroke="#353638" stroke-width="1.5"/></svg>
<div class="a" style="left:2537px;top:669px;width:102px;height:40px;border-radius:9px;border:1.5px solid #333436;box-sizing:border-box"></div>
<div class="t" style="left:2537px;top:677.0px;width:98px;text-align:right;font-size:24px;color:#cdcdcd">0 pt</div>
<div class="a" style="left:2642px;top:669px;width:21px;height:42px;border:1.5px solid #353638;border-radius:6px;box-sizing:border-box"></div><svg style="left:2642px;top:669px" width="22" height="42"><path d="M4 16.0 L11 9.0 L18 16.0 Z M4 26.0 L11 33.0 L18 26.0 Z" fill="#6d6f75"/><path d="M2 21.0 H20" stroke="#353638" stroke-width="1.5"/></svg>
<div class="a" style="left:2537px;top:735px;width:102px;height:40px;border-radius:9px;border:1.5px solid #333436;box-sizing:border-box"></div>
<div class="t" style="left:2537px;top:743.0px;width:98px;text-align:right;font-size:24px;color:#cdcdcd">100 %</div>
<div class="a" style="left:2642px;top:735px;width:21px;height:42px;border:1.5px solid #353638;border-radius:6px;box-sizing:border-box"></div><svg style="left:2642px;top:735px" width="22" height="42"><path d="M4 16.0 L11 9.0 L18 16.0 Z M4 26.0 L11 33.0 L18 26.0 Z" fill="#6d6f75"/><path d="M2 21.0 H20" stroke="#353638" stroke-width="1.5"/></svg>
<div class="t" style="left:2283px;top:677.3px;font-size:24px;color:#c9c9c9;font-weight:normal;">Perimeter</div>
<div class="t b" style="left:2245px;top:741.4px;font-size:24px;color:#c9c9c9;font-weight:bold;">Opacity</div>
<svg style="left:2248px;top:815px" width="24" height="24"><defs><linearGradient id="cb2248815" x1="0" y1="0" x2="0" y2="1"><stop offset="0" stop-color="#5a5b5d"/><stop offset="1" stop-color="#3e3f41"/></linearGradient></defs><rect x="0" y="0" width="24" height="24" rx="5" fill="url(#cb2248815)"/></svg>
<div class="t b" style="left:2285px;top:814.1px;font-size:24px;color:#c9c9c9;font-weight:bold;">Rounded</div>
<svg style="left:2472px;top:815px" width="24" height="24"><defs><linearGradient id="cb2472815" x1="0" y1="0" x2="0" y2="1"><stop offset="0" stop-color="#5a5b5d"/><stop offset="1" stop-color="#3e3f41"/></linearGradient></defs><rect x="0" y="0" width="24" height="24" rx="5" fill="url(#cb2472815)"/></svg>
<div class="t b" style="left:2509px;top:814.1px;font-size:24px;color:#c9c9c9;font-weight:bold;">Sketch</div>
<svg style="left:2248px;top:863px" width="24" height="24"><defs><linearGradient id="cb2248863" x1="0" y1="0" x2="0" y2="1"><stop offset="0" stop-color="#5a5b5d"/><stop offset="1" stop-color="#3e3f41"/></linearGradient></defs><rect x="0" y="0" width="24" height="24" rx="5" fill="url(#cb2248863)"/></svg>
<div class="t b" style="left:2285px;top:861.7px;font-size:24px;color:#c9c9c9;font-weight:bold;">Glass</div>
<svg style="left:2472px;top:863px" width="24" height="24"><defs><linearGradient id="cb2472863" x1="0" y1="0" x2="0" y2="1"><stop offset="0" stop-color="#333436"/><stop offset="1" stop-color="#29292b"/></linearGradient></defs><rect x="0" y="0" width="24" height="24" rx="5" fill="url(#cb2472863)"/></svg>
<div class="t b" style="left:2509px;top:861.7px;font-size:24px;color:#7a7a7a;font-weight:bold;">Shadow</div>
<div class="a" style="left:2244px;top:929px;width:420px;height:38px;border-radius:9px;background:linear-gradient(#2b2c2e,#1a1b1d);border:1px solid #353638;box-sizing:border-box"></div>
<div class="t" style="left:2261px;top:935.2px;font-size:24px;color:#cdcdcd;font-weight:normal;">Edit</div>
<svg style="left:2637px;top:937px" width="16" height="24"><path d="M2 9 L8 2 L14 9 Z M2 15 L8 22 L14 15 Z" fill="#bdbdbd"/></svg>
<div class="a" style="left:2244px;top:973px;width:420px;height:41px;border-radius:9px;border:1.5px solid #333436;box-sizing:border-box"></div>
<div class="t" style="left:2244px;top:981px;width:420px;text-align:center;font-size:25.3px;color:#c9c9c9">Copy Style</div>
<div class="a" style="left:2244px;top:1019px;width:420px;height:41px;border-radius:9px;border:1.5px solid #333436;box-sizing:border-box"></div>
<div class="t" style="left:2244px;top:1027px;width:420px;text-align:center;font-size:25.3px;color:#c9c9c9">Set as Default Style</div>
<div class="t b" style="left:2257px;top:1091.4px;font-size:24px;color:#c9c9c9;font-weight:bold;">Property</div>
<div class="t b" style="left:2467px;top:1091.4px;font-size:24px;color:#c9c9c9;font-weight:bold;">Value</div>
<div class="a" style="left:2696px;top:0;width:2px;height:1710px;background:#48494b"></div>
<div class="a" style="left:1870px;top:896px;width:396px;height:752px;background:#111213"></div>
<div class="a" style="left:1874px;top:900px;width:389px;height:740px;background:#1d1e20;border:1.5px solid #4a4b4d;border-radius:9px;box-sizing:border-box"></div>
<svg style="left:0;top:0" width="2698" height="1710"><defs><linearGradient id="hue" x1="0" y1="0" x2="1" y2="0"><stop offset="0" stop-color="#f00"/><stop offset=".167" stop-color="#ff0"/><stop offset=".333" stop-color="#0f0"/><stop offset=".5" stop-color="#0ff"/><stop offset=".667" stop-color="#00f"/><stop offset=".833" stop-color="#f0f"/><stop offset="1" stop-color="#f00"/></linearGradient><linearGradient id="wh" x1="0" y1="0" x2="0" y2="1"><stop offset="0" stop-color="#fff" stop-opacity="0"/><stop offset="1" stop-color="#fff" stop-opacity="1"/></linearGradient><linearGradient id="bw" x1="0" y1="0" x2="0" y2="1"><stop offset="0" stop-color="#fff"/><stop offset="1" stop-color="#000"/></linearGradient></defs><rect x="1923.5" y="946.5" width="244" height="137" fill="url(#hue)"/><rect x="1923.5" y="946.5" width="244" height="137" fill="url(#wh)" stroke="#fff" stroke-width="1.5"/><path d="M1926 1080 H1932" stroke="#555" stroke-width="1.5"/><rect x="2192.5" y="946.5" width="24" height="137" fill="url(#bw)" stroke="#fff" stroke-width="1.5"/><path d="M2183 1076 L2192 1083 L2183 1090 Z" fill="none" stroke="#ddd" stroke-width="1.5"/><circle cx="1934" cy="1109.5" r="5" fill="none" stroke="#d0d0d0" stroke-width="2"/><path d="M1942.5 1109.5 L1946.0 1109.5" stroke="#d0d0d0" stroke-width="2"/><path d="M1940.0 1115.5 L1942.5 1118.0" stroke="#d0d0d0" stroke-width="2"/><path d="M1934.0 1118.0 L1934.0 1121.5" stroke="#d0d0d0" stroke-width="2"/><path d="M1928.0 1115.5 L1925.5 1118.0" stroke="#d0d0d0" stroke-width="2"/><path d="M1925.5 1109.5 L1922.0 1109.5" stroke="#d0d0d0" stroke-width="2"/><path d="M1928.0 1103.5 L1925.5 1101.0" stroke="#d0d0d0" stroke-width="2"/><path d="M1934.0 1101.0 L1934.0 1097.5" stroke="#d0d0d0" stroke-width="2"/><path d="M1940.0 1103.5 L1942.5 1101.0" stroke="#d0d0d0" stroke-width="2"/><rect x="1953.5" y="1096" width="180" height="26.5" rx="4" fill="#2f5b7c" stroke="#3a3b3d" stroke-width="1"/><text x="1956" y="1116.6" font-family="Liberation Sans" font-size="19.5" fill="#f2f2f2">2F5B7C</text><rect x="2140" y="1094" width="35.5" height="30.5" rx="5" fill="none" stroke="#333436" stroke-width="1.5"/><rect x="2149" y="1101" width="16" height="16" fill="#111"/><path d="M2165 1101 V1117 H2149 Z" fill="#fff"/><rect x="2180" y="1094" width="35.5" height="30.5" rx="5" fill="none" stroke="#333436" stroke-width="1.5"/><path d="M2191 1118 L2191 1115 L2199 1107 L2202 1110 L2194 1118 Z" fill="none" stroke="#c8c8c8" stroke-width="1.5"/><path d="M2198 1106 L2202 1102 Q2204 1100.5 2205.5 1102 Q2207 1103.5 2205.5 1105 L2201.5 1109 M2197 1105 L2203 1111" fill="none" stroke="#c8c8c8" stroke-width="1.5"/><path d="M1928 1141 H1941 L1934.5 1148.5 Z" fill="#9a9a9a"/><text x="1951" y="1150.7" font-family="Liberation Sans" font-size="19" fill="#c9c9c9">Advanced</text><path d="M1939 1169 A9.5 9.5 0 1 0 1946 1183 A8 8 0 0 1 1939 1169 Z" fill="none" stroke="#d0d0d0" stroke-width="1.8"/><rect x="1953" y="1161.2" width="90" height="32" rx="6" fill="#3a6a94" stroke="#1f5f96" stroke-width="3.2"/><rect x="1957" y="1165" width="70" height="24" fill="#5b86b1"/><rect x="2027" y="1165" width="12" height="24" fill="#85abc7"/><text x="1958" y="1184.1" font-family="Liberation Sans" font-size="19.5" fill="#fff">85ABC7</text><defs><linearGradient id="sel" x1="0" y1="0" x2="0" y2="1"><stop offset="0" stop-color="#2c2d2f"/><stop offset="1" stop-color="#18191b"/></linearGradient></defs><rect x="2047.5" y="1163.5" width="165.5" height="27.5" rx="7" fill="url(#sel)" stroke="#333436" stroke-width="1"/><text x="2058" y="1184" font-family="Liberation Sans" font-size="19.5" fill="#cdcdcd">Automatic</text><path d="M2196 1174 L2200.5 1168 L2205 1174 Z M2196 1180 L2200.5 1186 L2205 1180 Z" fill="#c8c8c8"/><rect x="1932.7" y="1205.2" width="275.20000000000005" height="24.400000000000002" fill="#000"/><rect x="1934.2" y="1206.7" width="21.400000000000002" height="21.400000000000002" fill="#FFFFFF"/><rect x="1957.0" y="1206.7" width="21.400000000000002" height="21.400000000000002" fill="#FFFFFF"/><rect x="1979.8" y="1206.7" width="21.400000000000002" height="21.400000000000002" fill="#FFFFFF"/><rect x="2002.6000000000001" y="1206.7" width="21.400000000000002" height="21.400000000000002" fill="#FFFFFF"/><rect x="2025.4" y="1206.7" width="21.400000000000002" height="21.400000000000002" fill="#FFFFFF"/><rect x="2048.2" y="1206.7" width="21.400000000000002" height="21.400000000000002" fill="#FFFFFF"/><rect x="2071.0" y="1206.7" width="21.400000000000002" height="21.400000000000002" fill="#FFFFFF"/><rect x="2093.7999999999997" y="1206.7" width="21.400000000000002" height="21.400000000000002" fill="#FFFFFF"/><rect x="2116.6" y="1206.7" width="21.400000000000002" height="21.400000000000002" fill="#FFFFFF"/><rect x="2139.3999999999996" y="1206.7" width="21.400000000000002" height="21.400000000000002" fill="#FFFFFF"/><rect x="2162.2" y="1206.7" width="21.400000000000002" height="21.400000000000002" fill="#FFFFFF"/><path d="M2190.3 1212.0 L2201.1000000000004 1222.8 M2201.1000000000004 1212.0 L2190.3 1222.8" stroke="#fff" stroke-width="2"/><rect x="1932.7" y="1239.7" width="275.20000000000005" height="47.2" fill="#000"/><rect x="1934.2" y="1241.2" width="21.400000000000002" height="21.400000000000002" fill="#E6D0DE"/><rect x="1957.0" y="1241.2" width="21.400000000000002" height="21.400000000000002" fill="#CDA2BE"/><rect x="1979.8" y="1241.2" width="21.400000000000002" height="21.400000000000002" fill="#B5739D"/><rect x="2002.6000000000001" y="1241.2" width="21.400000000000002" height="21.400000000000002" fill="#E1D5E7"/><rect x="2025.4" y="1241.2" width="21.400000000000002" height="21.400000000000002" fill="#C3ABD0"/><rect x="2048.2" y="1241.2" width="21.400000000000002" height="21.400000000000002" fill="#A680B8"/><rect x="2071.0" y="1241.2" width="21.400000000000002" height="21.400000000000002" fill="#D4E1F5"/><rect x="2093.7999999999997" y="1241.2" width="21.400000000000002" height="21.400000000000002" fill="#A9C4EB"/><rect x="2116.6" y="1241.2" width="21.400000000000002" height="21.400000000000002" fill="#7EA6E0"/><rect x="2139.3999999999996" y="1241.2" width="21.400000000000002" height="21.400000000000002" fill="#D5E8D4"/><rect x="2162.2" y="1241.2" width="21.400000000000002" height="21.400000000000002" fill="#9AC7BF"/><rect x="2185.0" y="1241.2" width="21.400000000000002" height="21.400000000000002" fill="#67AB9F"/><rect x="1934.2" y="1264.0" width="21.400000000000002" height="21.400000000000002" fill="#D5E8D4"/><rect x="1957.0" y="1264.0" width="21.400000000000002" height="21.400000000000002" fill="#B9E0A5"/><rect x="1979.8" y="1264.0" width="21.400000000000002" height="21.400000000000002" fill="#97D077"/><rect x="2002.6000000000001" y="1264.0" width="21.400000000000002" height="21.400000000000002" fill="#FFF2CC"/><rect x="2025.4" y="1264.0" width="21.400000000000002" height="21.400000000000002" fill="#FFE599"/><rect x="2048.2" y="1264.0" width="21.400000000000002" height="21.400000000000002" fill="#FFD966"/><rect x="2071.0" y="1264.0" width="21.400000000000002" height="21.400000000000002" fill="#FFF4C3"/><rect x="2093.7999999999997" y="1264.0" width="21.400000000000002" height="21.400000000000002" fill="#FFCE9F"/><rect x="2116.6" y="1264.0" width="21.400000000000002" height="21.400000000000002" fill="#FFB570"/><rect x="2139.3999999999996" y="1264.0" width="21.400000000000002" height="21.400000000000002" fill="#F8CECC"/><rect x="2162.2" y="1264.0" width="21.400000000000002" height="21.400000000000002" fill="#F19C99"/><rect x="2185.0" y="1264.0" width="21.400000000000002" height="21.400000000000002" fill="#EA6B66"/><rect x="1932.7" y="1296.7" width="275.20000000000005" height="229.6" fill="#000"/><rect x="1934.2" y="1298.2" width="21.400000000000002" height="21.400000000000002" fill="#fff"/><rect x="1944.9" y="1298.2" width="10.700000000000001" height="10.700000000000001" fill="#ccc"/><rect x="1934.2" y="1308.9" width="10.700000000000001" height="10.700000000000001" fill="#ccc"/><rect x="1957.0" y="1298.2" width="21.400000000000002" height="21.400000000000002" fill="#FFFFFF"/><rect x="1979.8" y="1298.2" width="21.400000000000002" height="21.400000000000002" fill="#E6E6E6"/><rect x="2002.6000000000001" y="1298.2" width="21.400000000000002" height="21.400000000000002" fill="#CCCCCC"/><rect x="2025.4" y="1298.2" width="21.400000000000002" height="21.400000000000002" fill="#B3B3B3"/><rect x="2048.2" y="1298.2" width="21.400000000000002" height="21.400000000000002" fill="#999999"/><rect x="2071.0" y="1298.2" width="21.400000000000002" height="21.400000000000002" fill="#808080"/><rect x="2093.7999999999997" y="1298.2" width="21.400000000000002" height="21.400000000000002" fill="#666666"/><rect x="2116.6" y="1298.2" width="21.400000000000002" height="21.400000000000002" fill="#4D4D4D"/><rect x="2139.3999999999996" y="1298.2" width="21.400000000000002" height="21.400000000000002" fill="#333333"/><rect x="2162.2" y="1298.2" width="21.400000000000002" height="21.400000000000002" fill="#1A1A1A"/><rect x="2185.0" y="1298.2" width="21.400000000000002" height="21.400000000000002" fill="#000000"/><rect x="1934.2" y="1321.0" width="21.400000000000002" height="21.400000000000002" fill="#FFCCCC"/><rect x="1957.0" y="1321.0" width="21.400000000000002" height="21.400000000000002" fill="#FFE6CC"/><rect x="1979.8" y="1321.0" width="21.400000000000002" height="21.400000000000002" fill="#FFFFCC"/><rect x="2002.6000000000001" y="1321.0" width="21.400000000000002" height="21.400000000000002" fill="#E6FFCC"/><rect x="2025.4" y="1321.0" width="21.400000000000002" height="21.400000000000002" fill="#CCFFCC"/><rect x="2048.2" y="1321.0" width="21.400000000000002" height="21.400000000000002" fill="#CCFFE6"/><rect x="2071.0" y="1321.0" width="21.400000000000002" height="21.400000000000002" fill="#CCFFFF"/><rect x="2093.7999999999997" y="1321.0" width="21.400000000000002" height="21.400000000000002" fill="#CCE5FF"/><rect x="2116.6" y="1321.0" width="21.400000000000002" height="21.400000000000002" fill="#CCCCFF"/><rect x="2139.3999999999996" y="1321.0" width="21.400000000000002" height="21.400000000000002" fill="#E5CCFF"/><rect x="2162.2" y="1321.0" width="21.400000000000002" height="21.400000000000002" fill="#FFCCFF"/><rect x="2185.0" y="1321.0" width="21.400000000000002" height="21.400000000000002" fill="#FFCCE6"/><rect x="1934.2" y="1343.8" width="21.400000000000002" height="21.400000000000002" fill="#FF9999"/><rect x="1957.0" y="1343.8" width="21.400000000000002" height="21.400000000000002" fill="#FFCC99"/><rect x="1979.8" y="1343.8" width="21.400000000000002" height="21.400000000000002" fill="#FFFF99"/><rect x="2002.6000000000001" y="1343.8" width="21.400000000000002" height="21.400000000000002" fill="#CCFF99"/><rect x="2025.4" y="1343.8" width="21.400000000000002" height="21.400000000000002" fill="#99FF99"/><rect x="2048.2" y="1343.8" width="21.400000000000002" height="21.400000000000002" fill="#99FFCC"/><rect x="2071.0" y="1343.8" width="21.400000000000002" height="21.400000000000002" fill="#99FFFF"/><rect x="2093.7999999999997" y="1343.8" width="21.400000000000002" height="21.400000000000002" fill="#99CCFF"/><rect x="2116.6" y="1343.8" width="21.400000000000002" height="21.400000000000002" fill="#9999FF"/><rect x="2139.3999999999996" y="1343.8" width="21.400000000000002" height="21.400000000000002" fill="#CC99FF"/><rect x="2162.2" y="1343.8" width="21.400000000000002" height="21.400000000000002" fill="#FF99FF"/><rect x="2185.0" y="1343.8" width="21.400000000000002" height="21.400000000000002" fill="#FF99CC"/><rect x="1934.2" y="1366.6000000000001" width="21.400000000000002" height="21.400000000000002" fill="#FF6666"/><rect x="1957.0" y="1366.6000000000001" width="21.400000000000002" height="21.400000000000002" fill="#FFB366"/><rect x="1979.8" y="1366.6000000000001" width="21.400000000000002" height="21.400000000000002" fill="#FFFF66"/><rect x="2002.6000000000001" y="1366.6000000000001" width="21.400000000000002" height="21.400000000000002" fill="#B3FF66"/><rect x="2025.4" y="1366.6000000000001" width="21.400000000000002" height="21.400000000000002" fill="#66FF66"/><rect x="2048.2" y="1366.6000000000001" width="21.400000000000002" height="21.400000000000002" fill="#66FFB3"/><rect x="2071.0" y="1366.6000000000001" width="21.400000000000002" height="21.400000000000002" fill="#66FFFF"/><rect x="2093.7999999999997" y="1366.6000000000001" width="21.400000000000002" height="21.400000000000002" fill="#66B2FF"/><rect x="2116.6" y="1366.6000000000001" width="21.400000000000002" height="21.400000000000002" fill="#6666FF"/><rect x="2139.3999999999996" y="1366.6000000000001" width="21.400000000000002" height="21.400000000000002" fill="#B266FF"/><rect x="2162.2" y="1366.6000000000001" width="21.400000000000002" height="21.400000000000002" fill="#FF66FF"/><rect x="2185.0" y="1366.6000000000001" width="21.400000000000002" height="21.400000000000002" fill="#FF66B3"/><rect x="1934.2" y="1389.4" width="21.400000000000002" height="21.400000000000002" fill="#FF3333"/><rect x="1957.0" y="1389.4" width="21.400000000000002" height="21.400000000000002" fill="#FF9933"/><rect x="1979.8" y="1389.4" width="21.400000000000002" height="21.400000000000002" fill="#FFFF33"/><rect x="2002.6000000000001" y="1389.4" width="21.400000000000002" height="21.400000000000002" fill="#99FF33"/><rect x="2025.4" y="1389.4" width="21.400000000000002" height="21.400000000000002" fill="#33FF33"/><rect x="2048.2" y="1389.4" width="21.400000000000002" height="21.400000000000002" fill="#33FF99"/><rect x="2071.0" y="1389.4" width="21.400000000000002" height="21.400000000000002" fill="#33FFFF"/><rect x="2093.7999999999997" y="1389.4" width="21.400000000000002" height="21.400000000000002" fill="#3399FF"/><rect x="2116.6" y="1389.4" width="21.400000000000002" height="21.400000000000002" fill="#3333FF"/><rect x="2139.3999999999996" y="1389.4" width="21.400000000000002" height="21.400000000000002" fill="#9933FF"/><rect x="2162.2" y="1389.4" width="21.400000000000002" height="21.400000000000002" fill="#FF33FF"/><rect x="2185.0" y="1389.4" width="21.400000000000002" height="21.400000000000002" fill="#FF3399"/><rect x="1934.2" y="1412.2" width="21.400000000000002" height="21.400000000000002" fill="#FF0000"/><rect x="1957.0" y="1412.2" width="21.400000000000002" height="21.400000000000002" fill="#FF8000"/><rect x="1979.8" y="1412.2" width="21.400000000000002" height="21.400000000000002" fill="#FFFF00"/><rect x="2002.6000000000001" y="1412.2" width="21.400000000000002" height="21.400000000000002" fill="#80FF00"/><rect x="2025.4" y="1412.2" width="21.400000000000002" height="21.400000000000002" fill="#00FF00"/><rect x="2048.2" y="1412.2" width="21.400000000000002" height="21.400000000000002" fill="#00FF80"/><rect x="2071.0" y="1412.2" width="21.400000000000002" height="21.400000000000002" fill="#00FFFF"/><rect x="2093.7999999999997" y="1412.2" width="21.400000000000002" height="21.400000000000002" fill="#007FFF"/><rect x="2116.6" y="1412.2" width="21.400000000000002" height="21.400000000000002" fill="#0000FF"/><rect x="2139.3999999999996" y="1412.2" width="21.400000000000002" height="21.400000000000002" fill="#7F00FF"/><rect x="2162.2" y="1412.2" width="21.400000000000002" height="21.400000000000002" fill="#FF00FF"/><rect x="2185.0" y="1412.2" width="21.400000000000002" height="21.400000000000002" fill="#FF0080"/><rect x="1934.2" y="1435.0" width="21.400000000000002" height="21.400000000000002" fill="#CC0000"/><rect x="1957.0" y="1435.0" width="21.400000000000002" height="21.400000000000002" fill="#CC6600"/><rect x="1979.8" y="1435.0" width="21.400000000000002" height="21.400000000000002" fill="#CCCC00"/><rect x="2002.6000000000001" y="1435.0" width="21.400000000000002" height="21.400000000000002" fill="#66CC00"/><rect x="2025.4" y="1435.0" width="21.400000000000002" height="21.400000000000002" fill="#00CC00"/><rect x="2048.2" y="1435.0" width="21.400000000000002" height="21.400000000000002" fill="#00CC66"/><rect x="2071.0" y="1435.0" width="21.400000000000002" height="21.400000000000002" fill="#00CCCC"/><rect x="2093.7999999999997" y="1435.0" width="21.400000000000002" height="21.400000000000002" fill="#0066CC"/><rect x="2116.6" y="1435.0" width="21.400000000000002" height="21.400000000000002" fill="#0000CC"/><rect x="2139.3999999999996" y="1435.0" width="21.400000000000002" height="21.400000000000002" fill="#6600CC"/><rect x="2162.2" y="1435.0" width="21.400000000000002" height="21.400000000000002" fill="#CC00CC"/><rect x="2185.0" y="1435.0" width="21.400000000000002" height="21.400000000000002" fill="#CC0066"/><rect x="1934.2" y="1457.8" width="21.400000000000002" height="21.400000000000002" fill="#990000"/><rect x="1957.0" y="1457.8" width="21.400000000000002" height="21.400000000000002" fill="#994C00"/><rect x="1979.8" y="1457.8" width="21.400000000000002" height="21.400000000000002" fill="#999900"/><rect x="2002.6000000000001" y="1457.8" width="21.400000000000002" height="21.400000000000002" fill="#4D9900"/><rect x="2025.4" y="1457.8" width="21.400000000000002" height="21.400000000000002" fill="#009900"/><rect x="2048.2" y="1457.8" width="21.400000000000002" height="21.400000000000002" fill="#00994D"/><rect x="2071.0" y="1457.8" width="21.400000000000002" height="21.400000000000002" fill="#009999"/><rect x="2093.7999999999997" y="1457.8" width="21.400000000000002" height="21.400000000000002" fill="#004C99"/><rect x="2116.6" y="1457.8" width="21.400000000000002" height="21.400000000000002" fill="#000099"/><rect x="2139.3999999999996" y="1457.8" width="21.400000000000002" height="21.400000000000002" fill="#4C0099"/><rect x="2162.2" y="1457.8" width="21.400000000000002" height="21.400000000000002" fill="#990099"/><rect x="2185.0" y="1457.8" width="21.400000000000002" height="21.400000000000002" fill="#99004D"/><rect x="1934.2" y="1480.6000000000001" width="21.400000000000002" height="21.400000000000002" fill="#660000"/><rect x="1957.0" y="1480.6000000000001" width="21.400000000000002" height="21.400000000000002" fill="#663300"/><rect x="1979.8" y="1480.6000000000001" width="21.400000000000002" height="21.400000000000002" fill="#666600"/><rect x="2002.6000000000001" y="1480.6000000000001" width="21.400000000000002" height="21.400000000000002" fill="#336600"/><rect x="2025.4" y="1480.6000000000001" width="21.400000000000002" height="21.400000000000002" fill="#006600"/><rect x="2048.2" y="1480.6000000000001" width="21.400000000000002" height="21.400000000000002" fill="#006633"/><rect x="2071.0" y="1480.6000000000001" width="21.400000000000002" height="21.400000000000002" fill="#006666"/><rect x="2093.7999999999997" y="1480.6000000000001" width="21.400000000000002" height="21.400000000000002" fill="#003366"/><rect x="2116.6" y="1480.6000000000001" width="21.400000000000002" height="21.400000000000002" fill="#000066"/><rect x="2139.3999999999996" y="1480.6000000000001" width="21.400000000000002" height="21.400000000000002" fill="#330066"/><rect x="2162.2" y="1480.6000000000001" width="21.400000000000002" height="21.400000000000002" fill="#660066"/><rect x="2185.0" y="1480.6000000000001" width="21.400000000000002" height="21.400000000000002" fill="#660033"/><rect x="1934.2" y="1503.4" width="21.400000000000002" height="21.400000000000002" fill="#330000"/><rect x="1957.0" y="1503.4" width="21.400000000000002" height="21.400000000000002" fill="#331A00"/><rect x="1979.8" y="1503.4" width="21.400000000000002" height="21.400000000000002" fill="#333300"/><rect x="2002.6000000000001" y="1503.4" width="21.400000000000002" height="21.400000000000002" fill="#1A3300"/><rect x="2025.4" y="1503.4" width="21.400000000000002" height="21.400000000000002" fill="#003300"/><rect x="2048.2" y="1503.4" width="21.400000000000002" height="21.400000000000002" fill="#00331A"/><rect x="2071.0" y="1503.4" width="21.400000000000002" height="21.400000000000002" fill="#003333"/><rect x="2093.7999999999997" y="1503.4" width="21.400000000000002" height="21.400000000000002" fill="#001933"/><rect x="2116.6" y="1503.4" width="21.400000000000002" height="21.400000000000002" fill="#000033"/><rect x="2139.3999999999996" y="1503.4" width="21.400000000000002" height="21.400000000000002" fill="#190033"/><rect x="2162.2" y="1503.4" width="21.400000000000002" height="21.400000000000002" fill="#330033"/><rect x="2185.0" y="1503.4" width="21.400000000000002" height="21.400000000000002" fill="#33001A"/><circle cx="1992.5" cy="1565.3" r="8.5" fill="none" stroke="#9a9a9a" stroke-width="1.6"/><text x="1992.5" y="1571" font-family="Liberation Sans" font-size="14" fill="#9a9a9a" text-anchor="middle">?</text><rect x="2019.5" y="1547" width="95.5" height="39" rx="6" fill="#033356"/><text x="2067" y="1574" font-family="Liberation Sans" font-size="19" font-weight="bold" fill="#cfd3d8" text-anchor="middle">Apply</text><rect x="2126.5" y="1547" width="95" height="39" rx="6" fill="none" stroke="#3a3b3d" stroke-width="1.5"/><text x="2174" y="1574" font-family="Liberation Sans" font-size="19" font-weight="bold" fill="#c9c9c9" text-anchor="middle">Cancel</text></svg>
<div class="a" style="left:247px;top:1700px;width:2369px;height:40px;background:#262626;border:1.5px solid #4f4f4f;border-radius:22px;box-sizing:border-box"></div>
<svg style="left:0;top:0" width="2698" height="1710"><path d="M2597 483 L2091 1124" stroke="#fe5b4c" stroke-width="13.6" stroke-linecap="round"/><path d="M2069 1151 L2076.3 1101.7 L2084.6 1119.8 L2096 1128.8 L2115.3 1132.1 Z" fill="#fe5b4c"/></svg>
<div class="a" style="left:0;top:0;width:2698px;height:1px;background:#000"></div>
</body></html>
